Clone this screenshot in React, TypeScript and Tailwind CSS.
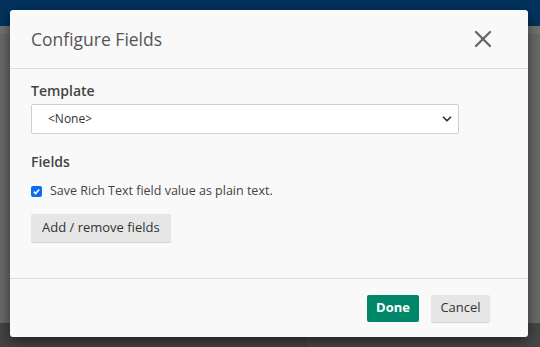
import { ChevronDown, X } from "lucide-react";

export default function App() {
  return (
    <div
      className="relative h-[347px] w-[540px] overflow-hidden bg-[#6a6a6a]"
      style={{ fontFamily: '"Open Sans", "Liberation Sans", sans-serif' }}
    >
      {/* page behind the backdrop */}
      <div className="h-[26px] bg-[#02335e]" />
      <div className="h-[8px] bg-[#727272]" />
      <div className="absolute bottom-0 left-0 right-0 flex h-[24px]">
        <div className="w-[305px] bg-[#444]" />
        <div className="flex-1 border-l border-[#3a3a3a] bg-[#474747]" />
      </div>

      {/* dialog */}
      <div className="absolute left-[10px] top-[10px] flex h-[327px] w-[518px] flex-col rounded-[3px] bg-[#f9f9f9] shadow-[0_4px_14px_rgba(0,0,0,0.55)]">
        <div className="flex h-[59px] items-center justify-between border-b border-[#dcdcdc] pl-[21px] pr-[31px]">
          <h2 className="text-[17.5px] text-[#555]">Configure Fields</h2>
          <X className="h-[28px] w-[28px] text-[#666]" strokeWidth={2} />
        </div>

        <div className="flex-1 border-b border-[#dcdcdc] px-[21px] pt-[11px]">
          <div className="text-[14px] font-semibold text-[#444]">Template</div>
          <div className="mt-[3px] flex h-[30px] w-[428px] items-center justify-between rounded-[2px] border border-[#cfcfcf] bg-white pl-[16px] pr-[4px]">
            <span className="text-[12px] text-[#333]">&lt;None&gt;</span>
            <ChevronDown className="h-[14px] w-[14px] text-[#333]" strokeWidth={3} />
          </div>

          <div className="mt-[17px] text-[14px] font-semibold text-[#444]">Fields</div>
          <label className="mt-[10px] flex items-center gap-[8px]">
            <span className="flex h-[11px] w-[11px] items-center justify-center rounded-[2px] bg-[#0b6cf0]">
              <svg width="9" height="9" viewBox="0 0 10 10" fill="none">
                <path d="M2 5.2l2 2L8 2.8" stroke="white" strokeWidth="1.8" />
              </svg>
            </span>
            <span className="text-[12.5px] text-[#444]">Save Rich Text field value as plain text.</span>
          </label>
          <button className="mt-[13px] h-[28px] rounded-[2px] bg-[#e6e6e6] px-[11px] text-[13px] text-[#333] shadow-[0_1px_1px_rgba(0,0,0,0.15)]">
            Add / remove fields
          </button>
        </div>

        <div className="flex h-[58px] items-center justify-end gap-[12px] pr-[38px]">
          <button className="h-[27px] w-[52px] rounded-[2px] bg-[#00876a] text-[13px] font-bold text-white">
            Done
          </button>
          <button className="h-[27px] w-[59px] rounded-[2px] bg-[#e6e6e6] text-[13px] text-[#333] shadow-[0_1px_1px_rgba(0,0,0,0.15)]">
            Cancel
          </button>
        </div>
      </div>
    </div>
  );
}
